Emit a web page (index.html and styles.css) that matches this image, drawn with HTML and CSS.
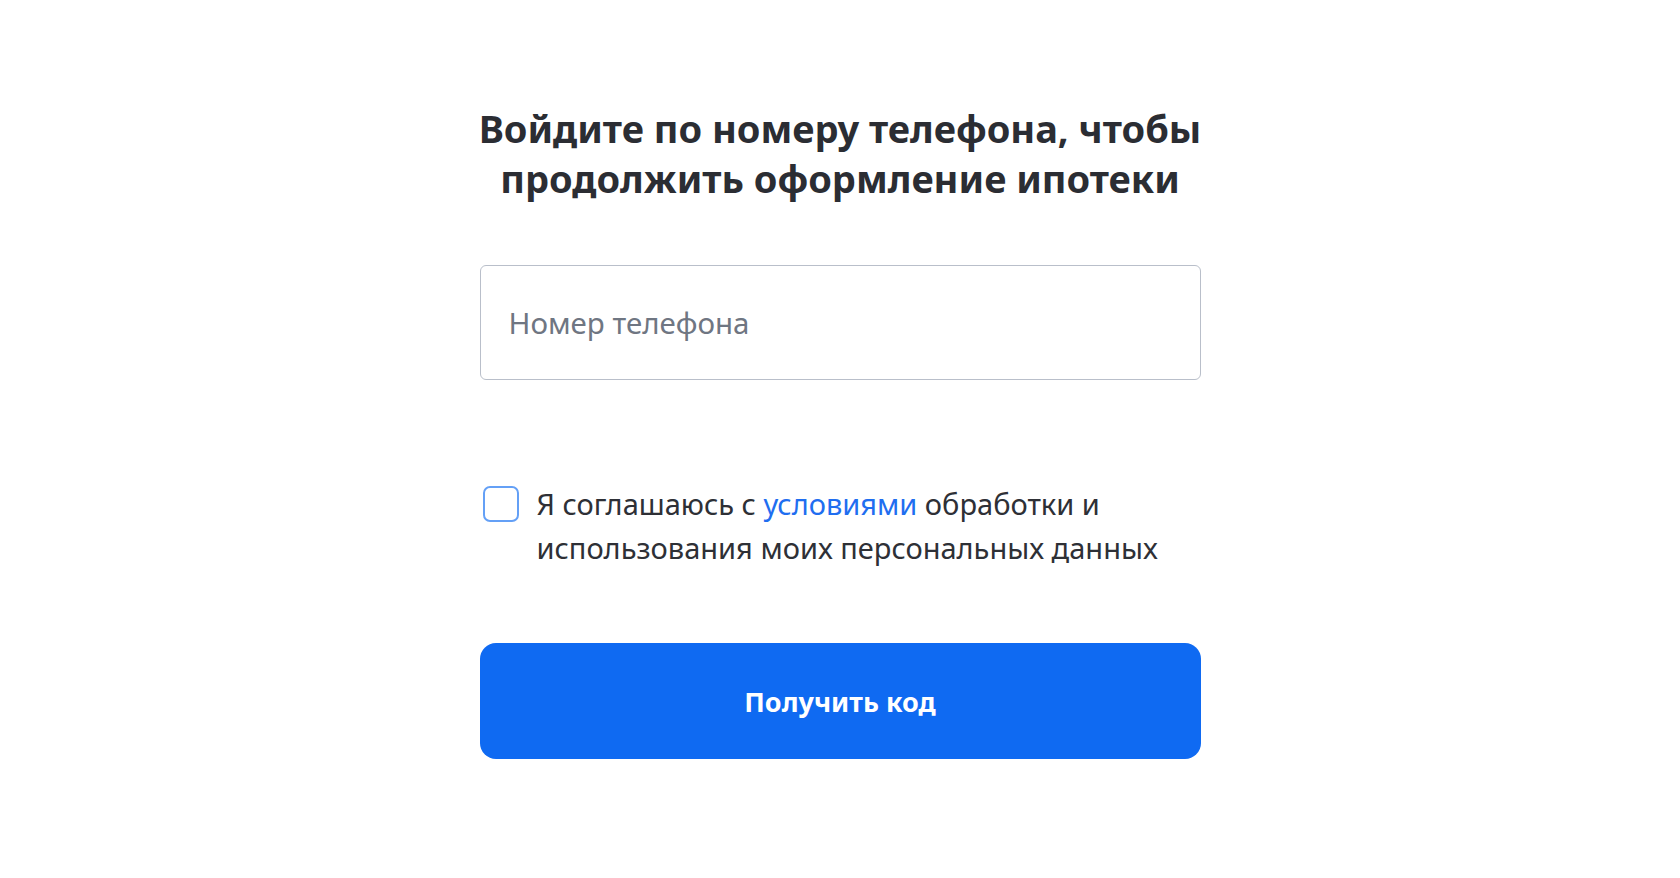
FILE: index.html
```html
<!DOCTYPE html>
<html lang="ru">
<head>
<meta charset="utf-8">
<title>Вход</title>
<link rel="stylesheet" href="styles.css">
</head>
<body>
<main class="page">
  <form class="card">
    <h1 class="title">Войдите по номеру телефона, чтобы продолжить оформление ипотеки</h1>
    <label class="field">
      <input class="field-input" type="tel" placeholder="Номер телефона">
    </label>
    <label class="agree">
      <span class="agree-box"></span>
      <span class="agree-text">Я соглашаюсь с <a class="agree-link" href="#">условиями</a> обработки и использования моих персональных данных</span>
    </label>
    <button class="submit" type="button">Получить код</button>
  </form>
</main>
</body>
</html>
```

FILE: styles.css
```css
html, body {
  margin: 0;
  padding: 0;
  background: #ffffff;
}

body {
  font-family: "Noto Sans", "Open Sans", sans-serif;
  color: #2b2d33;
}

.page {
  display: flex;
  justify-content: center;
  padding-top: 103px;
}

.card {
  width: 721px;
  display: flex;
  flex-direction: column;
}

.title {
  margin: 0 -24px;
  font-size: 38px;
  line-height: 50px;
  font-weight: 700;
  text-align: center;
  color: #2b2d33;
}

.field {
  display: block;
  margin-top: 62px;
}

.field-input {
  box-sizing: border-box;
  width: 100%;
  height: 115px;
  border: 1.5px solid #b9bfca;
  border-radius: 6px;
  padding: 0 28px;
  font-family: inherit;
  font-size: 29.5px;
  color: #2b2d33;
  outline: none;
  background: #fff;
}

.field-input::placeholder {
  color: #6f7682;
}

.agree {
  display: flex;
  align-items: flex-start;
  gap: 18px;
  margin-top: 106px;
  padding-left: 3px;
  cursor: pointer;
}

.agree-box {
  flex: none;
  box-sizing: border-box;
  width: 36px;
  height: 36px;
  border: 2px solid #64a0f6;
  border-radius: 7px;
  background: #fff;
}

.agree-text {
  font-size: 29px;
  line-height: 44px;
  color: #2e3036;
  margin-top: -4px;
}

.agree-link {
  color: #1f6ef0;
  text-decoration: none;
}

.submit {
  margin-top: 73px;
  height: 116px;
  border: none;
  border-radius: 16px;
  background: #0f6af2;
  color: #fff;
  font-family: inherit;
  font-size: 27px;
  font-weight: 700;
  cursor: pointer;
}
```
